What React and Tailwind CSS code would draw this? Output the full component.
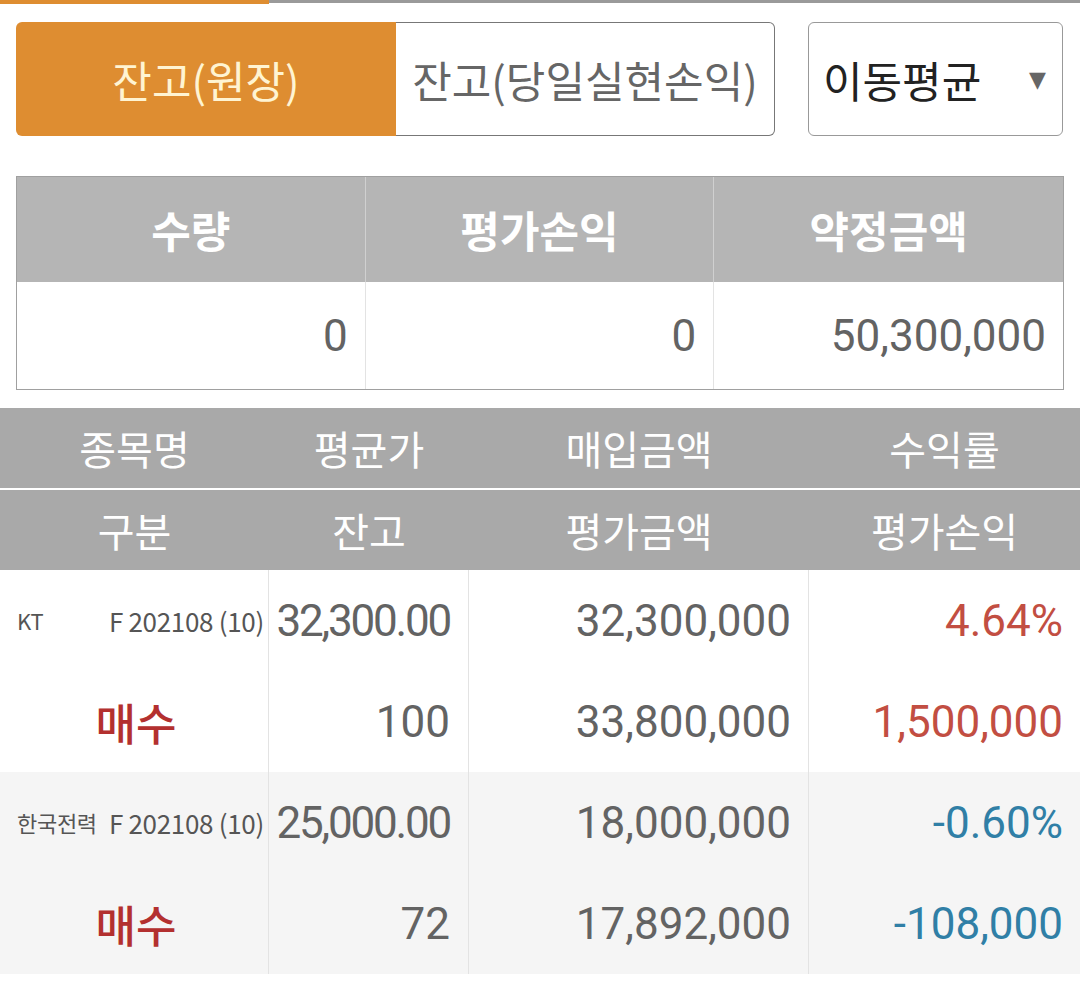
import React from 'react';

const kr = "font-['Noto_Sans_CJK_KR','Noto_Sans',sans-serif]";
const num = "font-['Roboto','Noto_Sans_CJK_KR',sans-serif]";

const summary = [
  { label: '수량', value: '0' },
  { label: '평가손익', value: '0' },
  { label: '약정금액', value: '50,300,000' },
];

const rows = [
  {
    name: 'KT',
    code: 'F 202108 (10)',
    side: '매수',
    avg: '32,300.00',
    qty: '100',
    buy: '32,300,000',
    evalAmt: '33,800,000',
    rate: '4.64%',
    pnl: '1,500,000',
    up: true,
    bg: 'bg-white',
  },
  {
    name: '한국전력',
    code: 'F 202108 (10)',
    side: '매수',
    avg: '25,000.00',
    qty: '72',
    buy: '18,000,000',
    evalAmt: '17,892,000',
    rate: '-0.60%',
    pnl: '-108,000',
    up: false,
    bg: 'bg-[#f5f5f5]',
  },
];

const HeaderRow = ({ labels }) => (
  <div className="grid grid-cols-[269px_200px_340px_271px] h-[80px] bg-[#a9a9a9]">
    {labels.map((l) => (
      <div key={l} className={`${kr} flex items-center justify-center text-white text-[40px]`}>
        {l}
      </div>
    ))}
  </div>
);

const Cell = ({ children, className = '' }) => (
  <div className={`flex flex-col border-r border-[#e3e3e3] last:border-r-0 ${className}`}>{children}</div>
);

const Line = ({ children, className = '' }) => (
  <div className={`h-[101px] flex items-center whitespace-nowrap ${className}`}>{children}</div>
);

const DataRow = ({ r }) => {
  const tone = r.up ? 'text-[#c24e42]' : 'text-[#307fa6]';
  return (
    <div className={`grid grid-cols-[269px_200px_340px_271px] ${r.bg}`}>
      <Cell>
        <Line className={`${kr} justify-between gap-2 pl-[17px] pr-[4px] text-[#555]`}>
          <span className="text-[22px] tracking-[-0.3px]">{r.name}</span>
          <span className="text-[26px] tracking-[-0.3px]">{r.code}</span>
        </Line>
        <Line className={`${kr} justify-center pl-[4px] text-[44px] text-[#b3302f] font-medium`}>{r.side}</Line>
      </Cell>
      <Cell>
        <Line className={`${num} justify-end pr-[18px] text-[44px] tracking-[-2.2px] text-[#636363]`}>{r.avg}</Line>
        <Line className={`${num} justify-end pr-[18px] text-[44px] text-[#636363]`}>{r.qty}</Line>
      </Cell>
      <Cell>
        <Line className={`${num} justify-end pr-[17px] text-[44px] text-[#636363]`}>{r.buy}</Line>
        <Line className={`${num} justify-end pr-[17px] text-[44px] text-[#636363]`}>{r.evalAmt}</Line>
      </Cell>
      <Cell>
        <Line className={`${num} justify-end pr-[17px] text-[44px] ${tone}`}>{r.rate}</Line>
        <Line className={`${num} justify-end pr-[17px] text-[44px] ${tone}`}>{r.pnl}</Line>
      </Cell>
    </div>
  );
};

export default function App() {
  return (
    <div className="w-[1080px] h-[992px] bg-white overflow-hidden">
      <div className="flex items-start h-[4px]">
        <div className="w-[269px] h-[4px] bg-[#de8d31]" />
        <div className="flex-1 h-[3px] bg-[#9a9a9a]" />
      </div>

      <div className="flex px-4 mt-[18px] gap-[33px]">
        <div className="flex h-[114px]">
          <div className={`${kr} w-[380px] flex items-center justify-center rounded-l-[6px] bg-[#de8d31] text-[#fff4d2] text-[43px]`}>
            잔고(원장)
          </div>
          <div className={`${kr} w-[379px] flex items-center justify-center rounded-r-[6px] border border-l-0 border-[#777] bg-white text-[#666] text-[43px]`}>
            잔고(당일실현손익)
          </div>
        </div>
        <div className="w-[255px] h-[114px] flex items-center justify-between pl-[14px] pr-[16px] border border-[#999] rounded-[6px]">
          <span className={`${kr} text-[43px] text-[#222]`}>이동평균</span>
          <span className="text-[22px] text-[#666] font-['DejaVu_Sans',sans-serif]">▼</span>
        </div>
      </div>

      <div className="mx-4 mt-[40px] border border-[#a0a0a0]">
        <div className="grid grid-cols-3 h-[105px] bg-[#b5b5b5]">
          {summary.map((s, i) => (
            <div
              key={s.label}
              className={`${kr} flex items-center justify-center text-white text-[43px] font-bold ${i < 2 ? 'border-r border-[#d0d0d0]' : ''}`}
            >
              {s.label}
            </div>
          ))}
        </div>
        <div className="grid grid-cols-3 h-[107px] bg-white">
          {summary.map((s, i) => (
            <div
              key={s.label}
              className={`${num} flex items-center justify-end pr-[17px] text-[44px] text-[#636363] ${i < 2 ? 'border-r border-[#e3e3e3]' : ''}`}
            >
              {s.value}
            </div>
          ))}
        </div>
      </div>

      <div className="mt-[18px]">
        <HeaderRow labels={['종목명', '평균가', '매입금액', '수익률']} />
        <div className="h-[2px] bg-white" />
        <HeaderRow labels={['구분', '잔고', '평가금액', '평가손익']} />
        {rows.map((r) => (
          <DataRow key={r.name} r={r} />
        ))}
      </div>
    </div>
  );
}
